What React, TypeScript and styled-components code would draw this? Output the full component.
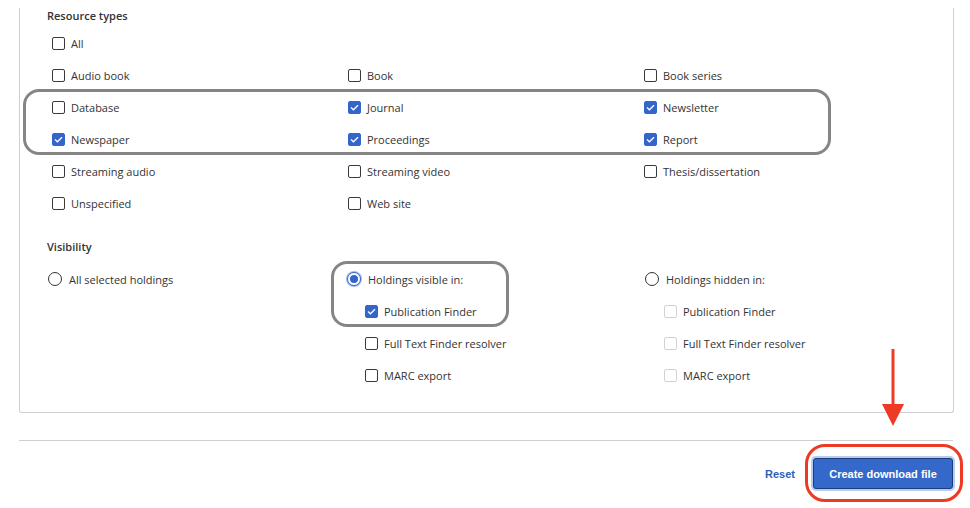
import React from 'react';
import styled, { createGlobalStyle } from 'styled-components';

const GlobalStyle = createGlobalStyle`
    html, body {
        margin: 0;
        padding: 0;
        background: #fff;
    }
    body {
        font-family: "Open Sans", "Noto Sans", sans-serif;
        color: #333;
    }
`;

const Page = styled.div`
    position: relative;
    width: 970px;
    height: 508px;
    overflow: hidden;
`;

const Card = styled.div`
    margin-left: 19px;
    width: 935px;
    box-sizing: border-box;
    border: 1px solid #cfcfcf;
    border-top: none;
    border-radius: 0 0 3px 3px;
    padding: 0 0 21px 27px;
`;

const Heading = styled.div<{ $top: number }>`
    margin-top: ${({ $top }) => $top}px;
    margin-bottom: 3px;
    height: 16px;
    line-height: 16px;
    font-size: 11px;
    font-weight: 600;
    color: #333;
`;

const TypeGrid = styled.div`
    display: grid;
    grid-template-columns: 296px 296px 1fr;
    grid-auto-rows: 32px;
`;

const VisGrid = styled.div`
    display: grid;
    grid-template-columns: 299px 298px 1fr;
    align-items: start;
    margin-top: 8px;
    margin-left: 1px;
`;

const Column = styled.div`
    display: flex;
    flex-direction: column;
`;

const Row = styled.label<{ $indent?: number }>`
    display: flex;
    flex-shrink: 0;
    align-items: center;
    height: 32px;
    padding-left: ${({ $indent }) => $indent ?? 0}px;
    font-size: 11px;
    color: #333;
    white-space: nowrap;
`;

const Box = styled.span<{ $checked?: boolean; $disabled?: boolean }>`
    display: inline-flex;
    align-items: center;
    justify-content: center;
    width: 13px;
    height: 13px;
    box-sizing: border-box;
    margin-left: 5px;
    margin-right: 6px;
    border-radius: 2px;
    border: 1px solid ${({ $checked, $disabled }) =>
        $checked ? '#3466c9' : $disabled ? '#d2d2d2' : '#3a3a3a'};
    background: ${({ $checked }) => ($checked ? '#3466c9' : '#fff')};
`;

const Radio = styled.span<{ $checked?: boolean }>`
    display: inline-flex;
    align-items: center;
    justify-content: center;
    width: 14px;
    height: 14px;
    box-sizing: border-box;
    margin-right: 7px;
    border-radius: 50%;
    border: 1px solid ${({ $checked }) => ($checked ? '#3466c9' : '#333')};
    box-shadow: ${({ $checked }) => ($checked ? '0 0 0 1px #9fb9ec' : 'none')};
    background: #fff;

    &::after {
        content: '';
        display: ${({ $checked }) => ($checked ? 'block' : 'none')};
        width: 8px;
        height: 8px;
        border-radius: 50%;
        background: #3466c9;
    }
`;

const Spacer = styled.div`
    height: 32px;
`;

const Divider = styled.div`
    margin: 27px 0 0 19px;
    width: 934px;
    height: 1px;
    background: #d0d0d0;
`;

const Footer = styled.div`
    display: flex;
    justify-content: flex-end;
    align-items: center;
    gap: 18px;
    margin-top: 17px;
    padding-right: 17px;
`;

const ResetLink = styled.a`
    font-family: "Liberation Sans", Arial, sans-serif;
    font-size: 11px;
    font-weight: bold;
    color: #2d5fb3;
    text-decoration: none;
    cursor: pointer;
`;

const PrimaryButton = styled.button`
    width: 140px;
    height: 31px;
    border: 1px solid #1d3c7a;
    border-radius: 3px;
    background: #3468cb;
    color: #fff;
    font-family: "Liberation Sans", Arial, sans-serif;
    font-size: 11px;
    font-weight: bold;
    box-shadow: 0 0 0 2px #b5cbf1;
    cursor: pointer;
`;

const Highlight = styled.div<{ $x: number; $y: number; $w: number; $h: number }>`
    position: absolute;
    left: ${({ $x }) => $x}px;
    top: ${({ $y }) => $y}px;
    width: ${({ $w }) => $w}px;
    height: ${({ $h }) => $h}px;
    box-sizing: border-box;
    border: 3px solid #858585;
    border-radius: 16px;
    pointer-events: none;
`;

const RedRing = styled.div`
    position: absolute;
    left: 805px;
    top: 444px;
    width: 158px;
    height: 58px;
    box-sizing: border-box;
    border: 3px solid #ee3a24;
    border-radius: 20px;
    pointer-events: none;
`;

const Arrow = styled.svg`
    position: absolute;
    left: 881px;
    top: 349px;
    pointer-events: none;
`;

const Check = () => (
    <svg width="9" height="7" viewBox="0 0 9 7">
        <path d="M1 3.6 L3.4 5.8 L8 1.2" fill="none" stroke="#fff" strokeWidth="1.3" />
    </svg>
);

interface Item {
    label: string;
    checked?: boolean;
}

const CheckRow: React.FC<Item & { indent?: number; disabled?: boolean }> = ({ label, checked, indent, disabled }) => (
    <Row $indent={indent}>
        <Box $checked={checked} $disabled={disabled}>{checked && <Check />}</Box>
        {label}
    </Row>
);

const types: (Item | null)[] = [
    { label: 'All' }, null, null,
    { label: 'Audio book' }, { label: 'Book' }, { label: 'Book series' },
    { label: 'Database' }, { label: 'Journal', checked: true }, { label: 'Newsletter', checked: true },
    { label: 'Newspaper', checked: true }, { label: 'Proceedings', checked: true }, { label: 'Report', checked: true },
    { label: 'Streaming audio' }, { label: 'Streaming video' }, { label: 'Thesis/dissertation' },
    { label: 'Unspecified' }, { label: 'Web site' }, null,
];

const App: React.FC = () => {
    return (
        <Page>
            <GlobalStyle />
            <Card>
                <Heading $top={8}>Resource types</Heading>
                <TypeGrid>
                    {types.map((t, i) =>
                        t ? <CheckRow key={i} label={t.label} checked={t.checked} /> : <Spacer key={i} />
                    )}
                </TypeGrid>

                <Heading $top={20}>Visibility</Heading>
                <VisGrid>
                    <Column>
                        <Row>
                            <Radio />
                            All selected holdings
                        </Row>
                    </Column>
                    <Column>
                        <Row>
                            <Radio $checked />
                            Holdings visible in:
                        </Row>
                        <CheckRow label="Publication Finder" checked indent={13} />
                        <CheckRow label="Full Text Finder resolver" indent={13} />
                        <CheckRow label="MARC export" indent={13} />
                    </Column>
                    <Column>
                        <Row>
                            <Radio />
                            Holdings hidden in:
                        </Row>
                        <CheckRow label="Publication Finder" disabled indent={14} />
                        <CheckRow label="Full Text Finder resolver" disabled indent={14} />
                        <CheckRow label="MARC export" disabled indent={14} />
                    </Column>
                </VisGrid>
            </Card>

            <Divider />

            <Footer>
                <ResetLink>Reset</ResetLink>
                <PrimaryButton>Create download file</PrimaryButton>
            </Footer>

            <Highlight $x={23} $y={89} $w={808} $h={66} />
            <Highlight $x={331} $y={261} $w={178} $h={66} />
            <RedRing />
            <Arrow width="24" height="78" viewBox="0 0 24 78">
                <line x1="12" y1="0" x2="12" y2="58" stroke="#ee3a24" strokeWidth="3" />
                <polygon points="1,55 23,55 12,77" fill="#ee3a24" />
            </Arrow>
        </Page>
    );
};

export default App;
